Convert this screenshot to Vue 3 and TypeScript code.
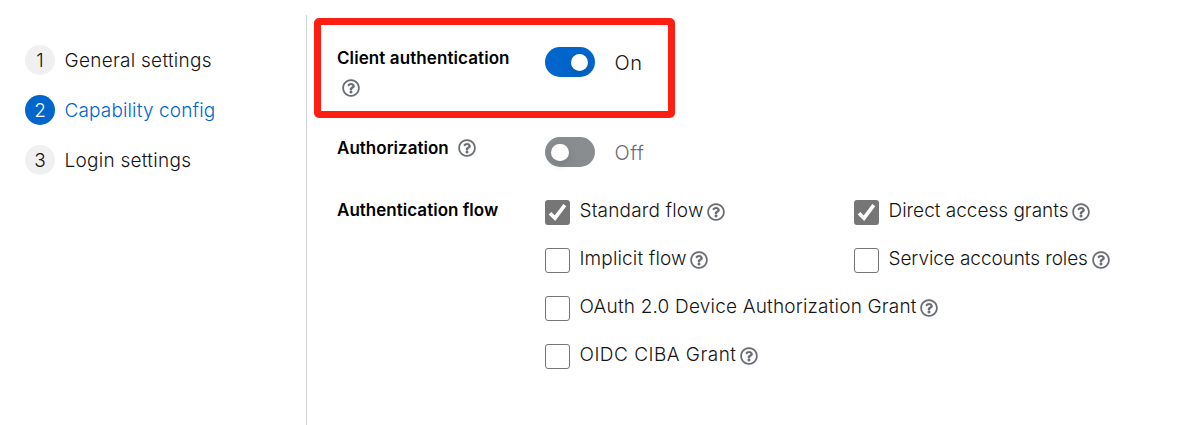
<script setup lang="ts">
import { defineComponent, h } from 'vue'

interface Text { label: string; width: number; spacing: number }
interface Step extends Text { active?: boolean }
interface Flow extends Text { checked?: boolean; wide?: boolean }

const steps: Step[] = [
  { label: 'General settings', width: 147, spacing: 0.27 },
  { label: 'Capability config', width: 150, spacing: 0.14, active: true },
  { label: 'Login settings', width: 126, spacing: 0.27 },
]

const flows: Flow[] = [
  { label: 'Standard flow', width: 123.5, spacing: 0.16, checked: true },
  { label: 'Direct access grants', width: 179.5, spacing: 0, checked: true },
  { label: 'Implicit flow', width: 106.5, spacing: 0.14 },
  { label: 'Service accounts roles', width: 199.5, spacing: -0.08 },
  { label: 'OAuth 2.0 Device Authorization Grant', width: 336.5, spacing: 0.19, wide: true },
  { label: 'OIDC CIBA Grant', width: 156.5, spacing: 0.48, wide: true },
]

const fit = (t: Text) => ({ width: `${t.width}px`, letterSpacing: `${t.spacing}px` })

const helpPath =
  'M256 8C119.043 8 8 119.083 8 256c0 136.997 111.043 248 248 248s248-111.003 248-248C504 119.083 392.957 8 256 8zm0 448c-110.532 0-200-89.431-200-200 0-110.495 89.472-200 200-200 110.491 0 200 89.471 200 200 0 110.53-89.431 200-200 200zm107.244-255.2c0 67.052-72.421 68.084-72.421 92.863V300c0 6.627-5.373 12-12 12h-45.647c-6.627 0-12-5.373-12-12v-8.659c0-35.745 27.1-50.034 47.579-61.516 17.561-9.845 28.324-16.541 28.324-29.579 0-17.246-21.999-28.693-39.784-28.693-23.189 0-33.894 10.977-48.942 29.969-4.057 5.12-11.46 6.071-16.666 2.124l-27.824-21.098c-5.107-3.872-6.251-11.066-2.644-16.363C184.846 131.491 214.94 112 261.794 112c49.071 0 101.45 38.304 101.45 88.8zM298 368c0 23.159-18.841 42-42 42s-42-18.841-42-42 18.841-42 42-42 42 18.841 42 42z'

const HelpIcon = defineComponent({
  render: () =>
    h('svg', { viewBox: '0 0 512 512', width: 18, height: 18, fill: '#6a6e73', stroke: '#6a6e73', 'stroke-width': 4, overflow: 'visible' }, [
      h('path', { d: helpPath }),
    ]),
})
</script>

<template>
  <div class="wizard">
    <nav class="steps">
      <a v-for="(step, i) in steps" :key="step.label" class="step" :class="{ active: step.active }">
        <span class="number">{{ i + 1 }}</span>
        <span class="text" :style="fit(step)">{{ step.label }}</span>
      </a>
    </nav>
    <main class="form">
      <div class="row client">
        <div class="name">
          <span class="title client-title">Client authentication</span>
          <HelpIcon class="help below" />
        </div>
        <div class="switch on"><span class="knob"></span></div>
        <span class="state">On</span>
        <div class="highlight"></div>
      </div>
      <div class="row authz">
        <div class="name inline">
          <span class="title authz-title">Authorization</span>
          <HelpIcon class="help" />
        </div>
        <div class="switch"><span class="knob"></span></div>
        <span class="state off">Off</span>
      </div>
      <div class="row flow-row">
        <div class="name"><span class="title flow-title">Authentication flow</span></div>
        <div class="flows">
          <label v-for="flow in flows" :key="flow.label" class="flow" :class="{ wide: flow.wide }">
            <span class="box" :class="{ checked: flow.checked }">
              <svg v-if="flow.checked" viewBox="0 0 25 25" width="25" height="25">
                <path d="M5 13.2 10 18.2 19.8 5.2" fill="none" stroke="#fff" stroke-width="3.7" />
              </svg>
            </span>
            <span class="text" :style="fit(flow)">{{ flow.label }}</span>
            <HelpIcon class="help" />
          </label>
        </div>
      </div>
    </main>
  </div>
</template>

<style>
body { margin: 0; background: #fff; }
</style>

<style scoped>
.wizard {
  display: flex;
  width: 1187px;
  height: 425px;
  overflow: hidden;
  font-family: Inter, "Liberation Sans", sans-serif;
  font-size: 19px;
  font-weight: 300;
  color: #151515;
  line-height: 32px;
}
.steps {
  width: 281px;
  padding: 45px 0 0 25px;
  display: flex;
  flex-direction: column;
  gap: 20px;
}
.step { display: flex; gap: 9.5px; height: 30px; }
.number {
  width: 30px;
  height: 30px;
  border-radius: 50%;
  background: #f0f0f0;
  text-align: center;
}
.active { color: #06c; }
.active .number { background: #06c; color: #fff; }
.text { white-space: nowrap; flex: none; }
.form {
  flex: 1;
  margin-top: 15px;
  padding: 32px 0 0 30px;
  border-left: 1px solid #d2d2d2;
}
.row { display: flex; }
.client { position: relative; height: 90px; }
.authz { height: 63px; }
.name { width: 208px; flex: none; line-height: 22px; }
.title {
  display: block;
  font-size: 17px;
  font-weight: 570;
  color: #000;
  white-space: nowrap;
}
.client-title { letter-spacing: 0.09px; }
.inline { display: flex; }
.authz-title { width: 121px; letter-spacing: 0.02px; }
.flow-title { margin-top: -1px; letter-spacing: 0.02px; }
.help { display: block; flex: none; }
.below { margin: 10px 0 0 5px; }
.inline .help { margin-top: 2px; }
.switch {
  width: 50px;
  height: 30px;
  flex: none;
  box-sizing: border-box;
  padding: 6.5px 6px;
  border-radius: 15px;
  background: #8a8d90;
}
.knob {
  display: block;
  width: 17.5px;
  height: 17.5px;
  border-radius: 50%;
  background: #fff;
  box-shadow: 0 4px 10px rgba(3, 3, 3, 0.13);
}
.on { background: #06c; }
.on .knob { margin-left: 19.5px; }
.state { margin-left: 19.5px; font-size: 20px; letter-spacing: 0.5px; }
.off { color: #6a6e73; }
.highlight {
  position: absolute;
  left: -23px;
  top: -29px;
  width: 361px;
  height: 100px;
  box-sizing: border-box;
  border: 7px solid #ff1f12;
  border-radius: 5px;
}
.flows {
  display: grid;
  grid-template-columns: 309px 290px;
  grid-auto-rows: 48px;
}
.flow { display: flex; }
.flow.wide { grid-column: 1 / -1; }
.flow .text { margin: -5px 4px 0 9.5px; }
.flow .help { margin-top: 3px; }
.box {
  width: 25px;
  height: 25px;
  flex: none;
  box-sizing: border-box;
  border: 1.5px solid #767676;
  border-radius: 3px;
}
.checked { border: 0; background: #767676; }
.box svg { display: block; }
</style>
